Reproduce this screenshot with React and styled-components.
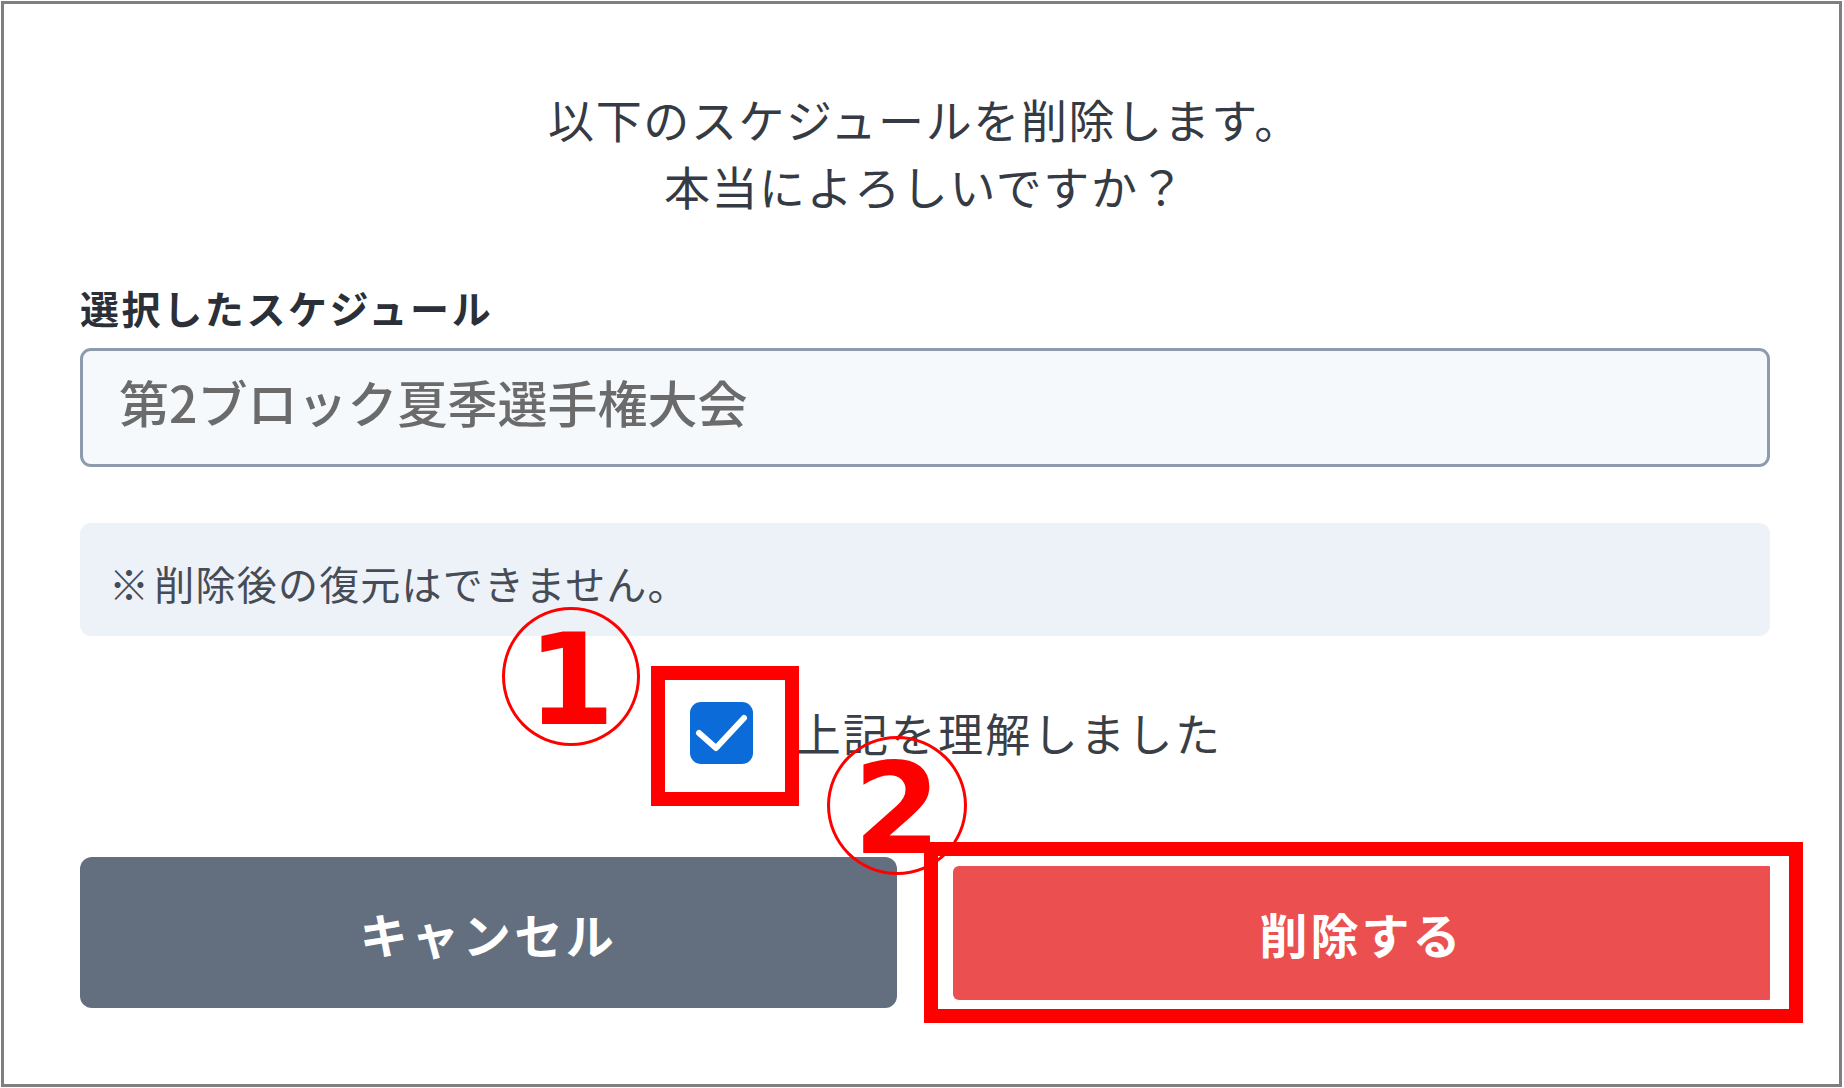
import React from 'react';
import styled, { createGlobalStyle } from 'styled-components';

const GlobalStyle = createGlobalStyle`
  html, body {
    margin: 0;
    padding: 0;
    background: #fff;
  }
  body {
    font-family: "Noto Sans CJK JP", "Noto Sans", sans-serif;
  }
`;

const Frame = styled.div`
  position: relative;
  box-sizing: border-box;
  margin: 1px 0 0 1px;
  width: 1841px;
  height: 1086px;
  border: 3px solid #7f7f7f;
  padding: 81px 69px 0 76px;
  display: flex;
  flex-direction: column;
  background: #fff;
`;

const Title = styled.p`
  margin: 0;
  text-align: center;
  font-size: 46px;
  line-height: 67px;
  letter-spacing: 1.6px;
  color: #353b45;
`;

const Label = styled.div`
  margin-top: 64px;
  font-size: 39px;
  line-height: 48px;
  font-weight: 700;
  letter-spacing: 2.6px;
  color: #2b3038;
`;

const Field = styled.div`
  margin-top: 17px;
  box-sizing: border-box;
  height: 119px;
  border: 3px solid #8e9bad;
  border-radius: 11px;
  background: #f6f9fc;
  display: flex;
  align-items: center;
  padding: 0 0 14px 36px;
  font-size: 50px;
  font-weight: 500;
  color: #6b6b6b;
`;

const Notice = styled.div`
  margin-top: 56px;
  box-sizing: border-box;
  height: 113px;
  border-radius: 11px;
  background: #edf1f8;
  display: flex;
  align-items: center;
  padding: 6px 0 0 29px;
  font-size: 40px;
  letter-spacing: 1.2px;
  word-spacing: -6px;
  color: #464c56;
`;

const CheckRow = styled.label`
  margin-top: 66px;
  display: flex;
  align-items: center;
  justify-content: center;
  padding-left: 62px;
  gap: 43px;
  height: 62px;
`;

const CheckBox = styled.span`
  width: 63px;
  height: 62px;
  border-radius: 11px;
  background: #0b6bd9;
  display: flex;
  align-items: center;
  justify-content: center;
  flex-shrink: 0;
`;

const CheckText = styled.span`
  font-size: 45px;
  letter-spacing: 2.4px;
  color: #3a3f47;
  line-height: 62px;
`;

const Buttons = styled.div`
  margin-top: 93px;
  display: grid;
  grid-template-columns: 1fr 1fr;
  column-gap: 56px;
  align-items: center;
`;

const Button = styled.button`
  box-sizing: border-box;
  border: none;
  height: ${(p) => (p.$danger ? '134px' : '151px')};
  border-radius: ${(p) => (p.$danger ? '6px 1px 1px 6px' : '12px')};
  background: ${(p) => (p.$danger ? '#ec4f4f' : '#636f7f')};
  color: #fff;
  font-family: "Noto Sans CJK JP", "Noto Sans", sans-serif;
  font-size: 48px;
  font-weight: 700;
  letter-spacing: ${(p) => (p.$danger ? '3px' : '3.5px')};
  padding: 0;
`;

const Ring = styled.div`
  position: absolute;
  z-index: 2;
  left: ${(p) => p.$x}px;
  top: ${(p) => p.$y}px;
  width: ${(p) => p.$w}px;
  height: ${(p) => p.$h}px;
  box-sizing: border-box;
  border: 3px solid #ff0000;
  border-radius: 50%;
  padding-top: 8px;
  display: flex;
  align-items: center;
  justify-content: center;
  font-family: "DejaVu Sans", sans-serif;
  font-weight: 700;
  font-size: 126px;
  line-height: 1;
  color: #ff0000;
`;

const Mark = styled.div`
  position: absolute;
  z-index: 2;
  left: ${(p) => p.$x}px;
  top: ${(p) => p.$y}px;
  width: ${(p) => p.$w}px;
  height: ${(p) => p.$h}px;
  box-sizing: border-box;
  border: 14px solid #ff0000;
`;

const Tick = () => (
  <svg width="63" height="62" viewBox="0 0 63 62">
    <path
      d="M9 31 L26 46 L54 16"
      fill="none"
      stroke="#fff"
      strokeWidth="6"
      strokeLinecap="round"
      strokeLinejoin="round"
    />
  </svg>
);

export default function App() {
  return (
    <>
      <GlobalStyle />
      <Frame>
        <Title>
          以下のスケジュールを削除します。
          <br />
          本当によろしいですか？
        </Title>
        <Label>選択したスケジュール</Label>
        <Field>第2ブロック夏季選手権大会</Field>
        <Notice>※ 削除後の復元はできません。</Notice>
        <CheckRow>
          <CheckBox>
            <Tick />
          </CheckBox>
          <CheckText>上記を理解しました</CheckText>
        </CheckRow>
        <Buttons>
          <Button>キャンセル</Button>
          <Button $danger>削除する</Button>
        </Buttons>

        <Ring $x={498} $y={603} $w={138} $h={139}>1</Ring>
        <Mark $x={647} $y={662} $w={148} $h={140} />
        <Ring $x={823} $y={732} $w={140} $h={139}>2</Ring>
        <Mark $x={920} $y={838} $w={879} $h={181} />
      </Frame>
    </>
  );
}
